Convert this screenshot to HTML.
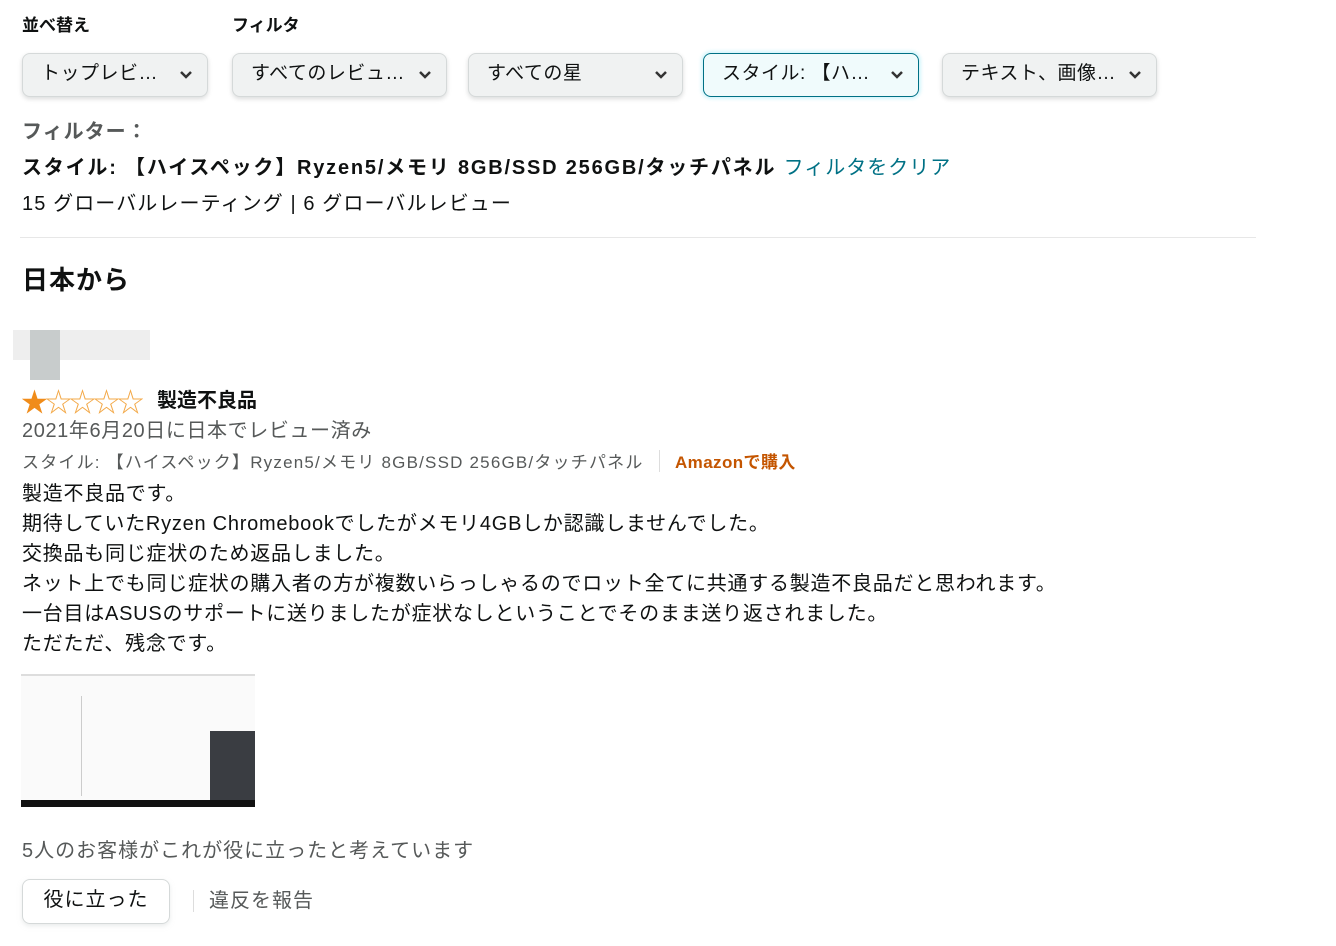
<!DOCTYPE html><html><head><meta charset="utf-8"><style>
body{margin:0;width:1336px;height:946px;background:#fff;font-family:"Liberation Sans","Noto Sans CJK JP",sans-serif;color:#0f1111;position:relative;overflow:hidden}
.a{position:absolute;white-space:nowrap}
.dd{position:absolute;top:53px;height:44px;border:1px solid #d5d9d9;border-radius:8px;background:#f0f2f2;box-shadow:0 2px 5px rgba(15,17,17,.15);box-sizing:border-box;font-size:19px;line-height:40px;padding-left:18px;color:#0f1111;letter-spacing:.5px}
.dd svg{position:absolute;right:14px;top:16px}
.g{color:#565959}
</style></head><body>
<div class="a" style="left:22px;top:11px;font-size:17px;font-weight:bold">並べ替え</div>
<div class="a" style="left:232px;top:11px;font-size:17px;font-weight:bold">フィルタ</div>
<div class="dd" style="left:22px;width:186px">トップレビ…<svg width="14" height="10"><path d="M2 2l5 5 5-5" stroke="#333" stroke-width="2.5" fill="none"/></svg></div>
<div class="dd" style="left:232px;width:215px">すべてのレビュ…<svg width="14" height="10"><path d="M2 2l5 5 5-5" stroke="#333" stroke-width="2.5" fill="none"/></svg></div>
<div class="dd" style="left:468px;width:215px">すべての星<svg width="14" height="10"><path d="M2 2l5 5 5-5" stroke="#333" stroke-width="2.5" fill="none"/></svg></div>
<div class="dd" style="left:703px;width:216px;border:1px solid #007185;background:#f0fbfc;box-shadow:0 0 3px 2px rgba(200,243,250,.8)">スタイル: 【ハ…<svg width="14" height="10"><path d="M2 2l5 5 5-5" stroke="#333" stroke-width="2.5" fill="none"/></svg></div>
<div class="dd" style="left:942px;width:215px">テキスト、画像…<svg width="14" height="10"><path d="M2 2l5 5 5-5" stroke="#333" stroke-width="2.5" fill="none"/></svg></div>
<div class="a g" style="left:22px;top:115px;font-size:20px;font-weight:bold;letter-spacing:1px">フィルター：</div>
<div class="a" style="left:22px;top:151px;font-size:20px;font-weight:bold;letter-spacing:1.8px">スタイル: 【ハイスペック】Ryzen5/メモリ 8GB/SSD 256GB/タッチパネル <span style="font-weight:normal;color:#007185;letter-spacing:1px">フィルタをクリア</span></div>
<div class="a" style="left:22px;top:187px;font-size:20px;letter-spacing:1.1px">15 グローバルレーティング | 6 グローバルレビュー</div>
<div class="a" style="left:20px;top:237px;width:1236px;height:1px;background:#e7e7e7"></div>
<div class="a" style="left:22px;top:260px;font-size:26px;font-weight:bold;letter-spacing:1px">日本から</div>
<div class="a" style="left:13px;top:330px;width:137px;height:30px;background:#eeeeee"></div>
<div class="a" style="left:30px;top:330px;width:30px;height:50px;background:#c8cccc"></div>
<div class="a" style="left:21px;top:381px;font-size:27px;color:#f08c1a;letter-spacing:-3px">★<span style="color:#f3a847">☆☆☆☆</span></div>
<div class="a" style="left:157px;top:384px;font-size:20px;font-weight:bold">製造不良品</div>
<div class="a g" style="left:22px;top:414px;font-size:20px;letter-spacing:.6px">2021年6月20日に日本でレビュー済み</div>
<div class="a g" style="left:22px;top:448px;font-size:17px;letter-spacing:1.2px">スタイル: 【ハイスペック】Ryzen5/メモリ 8GB/SSD 256GB/タッチパネル</div>
<div class="a" style="left:659px;top:450px;width:1px;height:22px;background:#ddd"></div>
<div class="a" style="left:675px;top:448px;font-size:17px;font-weight:bold;color:#c45500;letter-spacing:.4px">Amazonで購入</div>
<div class="a" style="left:22px;top:479px;font-size:20px;line-height:30px;letter-spacing:.75px">製造不良品です。<br>期待していたRyzen Chromebookでしたがメモリ4GBしか認識しませんでした。<br>交換品も同じ症状のため返品しました。<br>ネット上でも同じ症状の購入者の方が複数いらっしゃるのでロット全てに共通する製造不良品だと思われます。<br>一台目はASUSのサポートに送りましたが症状なしということでそのまま送り返されました。<br>ただただ、残念です。</div>
<div class="a" style="left:21px;top:674px;width:234px;height:131px;background:#fafafa;border-top:2px solid #ddd;box-sizing:border-box">
<div class="a" style="left:189px;top:55px;width:45px;height:70px;background:#3a3d42"></div>
<div class="a" style="left:0;top:124px;width:234px;height:7px;background:#111"></div>
<div class="a" style="left:60px;top:20px;width:1px;height:100px;background:#ccc"></div></div>
<div class="a g" style="left:22px;top:834px;font-size:20px;letter-spacing:1px">5人のお客様がこれが役に立ったと考えています</div>
<div class="a" style="left:22px;top:879px;width:148px;height:45px;border:1px solid #d5d9d9;border-radius:8px;box-shadow:0 2px 5px rgba(213,217,217,.5);box-sizing:border-box;text-align:center;line-height:41px;font-size:20px;letter-spacing:1px">役に立った</div>
<div class="a" style="left:193px;top:890px;width:1px;height:22px;background:#ddd"></div>
<div class="a g" style="left:209px;top:884px;font-size:20px;letter-spacing:1px">違反を報告</div>
</body></html>
